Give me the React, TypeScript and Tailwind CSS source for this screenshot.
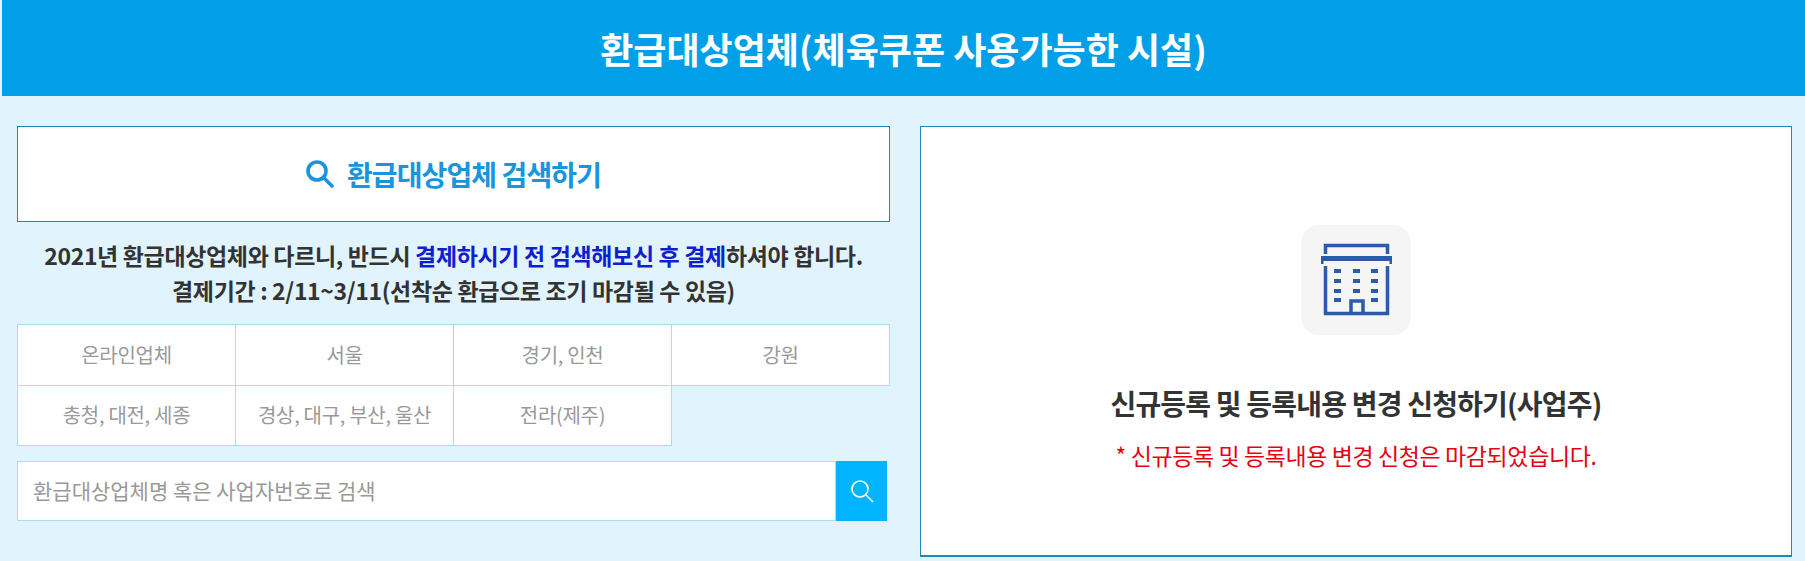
import React from 'react';

const regions = ['온라인업체', '서울', '경기, 인천', '강원', '충청, 대전, 세종', '경상, 대구, 부산, 울산', '전라(제주)'];

function BuildingIcon() {
  const windows = [];
  for (const y of [44, 54, 64, 73]) {
    for (const x of [33, 52, 70]) {
      if (y === 73 && x === 52) continue;
      windows.push(<rect key={`${x}-${y}`} x={x} y={y} width={7} height={4} />);
    }
  }
  return (
    <svg width="110" height="110" viewBox="0 0 110 110">
      <g fill="none" stroke="#2a5ca8" strokeWidth="3.500">
        <path d="M24.500 29V20.500H86.500V29" />
        <path d="M24.500 41V88.500H86.500V41" />
        <path d="M50 88V76H62V88" />
      </g>
      <g fill="#2a5ca8">
        <rect x={20} y={31} width={71} height={5} />
        <rect x={20} y={31} width={2.500} height={8} />
        <rect x={88.500} y={31} width={2.500} height={8} />
        {windows}
      </g>
    </svg>
  );
}

export default function App() {
  return (
    <div className="h-[561px] overflow-hidden bg-[#e1f3fc] text-[#333] font-['Noto_Sans_CJK_KR','Noto_Sans',sans-serif]">
      <header className="ml-[2px] h-[96px] bg-[#009fe8] flex items-center justify-center">
        <h1 className="text-[36px] font-bold text-white">환급대상업체(체육쿠폰 사용가능한 시설)</h1>
      </header>

      <div className="flex pl-[17px] pr-[13px] pt-[30px] gap-[30px]">
        <section className="w-[873px]">
          <button className="w-full h-[96px] bg-white border border-[#1b8ab5] flex items-center justify-center gap-[13px] text-[#1a94dc] text-[28px] font-bold tracking-[-0.9px]">
            <svg width="28" height="28" viewBox="0 0 28 28" fill="none" stroke="#1a94dc" strokeWidth="3.600">
              <circle cx="11" cy="11" r="9" />
              <path d="M17.500 17.500L26 26" strokeLinecap="round" />
            </svg>
            환급대상업체 검색하기
          </button>

          <div className="mt-[16px] text-center text-[23px] font-bold leading-[35px] tracking-[-0.35px] text-[#333]">
            <p>
              2021년 환급대상업체와 다르니, 반드시 <span className="text-[#0f1fd0]">결제하시기 전 검색해보신 후 결제</span>하셔야 합니다.
            </p>
            <p>결제기간 : 2/11~3/11(선착순 환급으로 조기 마감될 수 있음)</p>
          </div>

          <ul className="mt-[16px] grid grid-cols-4 border-t border-l border-[#acdcee]">
            {regions.map((r) => (
              <li
                key={r}
                className="h-[60.5px] bg-white border-r border-b border-[#acdcee] flex items-center justify-center text-[20px] text-[#999] tracking-[-0.3px]"
              >
                {r}
              </li>
            ))}
          </ul>

          <div className="mt-[15px] flex h-[60px] w-[870px]">
            <div className="flex-1 bg-white border border-[#acdcee] flex items-center pl-[15px] text-[21px] text-[#999]">
              환급대상업체명 혹은 사업자번호로 검색
            </div>
            <div className="w-[51px] bg-[#00b4ff] flex items-center justify-center">
              <svg width="24" height="24" viewBox="0 0 24 24" fill="none" stroke="white" strokeWidth="1.600">
                <circle cx="10" cy="10" r="8" />
                <path d="M16 16L23 23" />
              </svg>
            </div>
          </div>
        </section>

        <section className="w-[872px] h-[431px] bg-white border border-[#1b8ab5] border-b-2 flex flex-col items-center pt-[98px]">
          <div className="w-[110px] h-[110px] rounded-[18px] bg-[#f5f5f5]">
            <BuildingIcon />
          </div>
          <h2 className="mt-[49px] text-[28px] font-bold leading-[38px] tracking-[-0.8px] text-[#333]">신규등록 및 등록내용 변경 신청하기(사업주)</h2>
          <p className="mt-[17px] text-[23px] leading-[32px] tracking-[-0.4px] text-[#e60012]">* 신규등록 및 등록내용 변경 신청은 마감되었습니다.</p>
        </section>
      </div>
    </div>
  );
}
